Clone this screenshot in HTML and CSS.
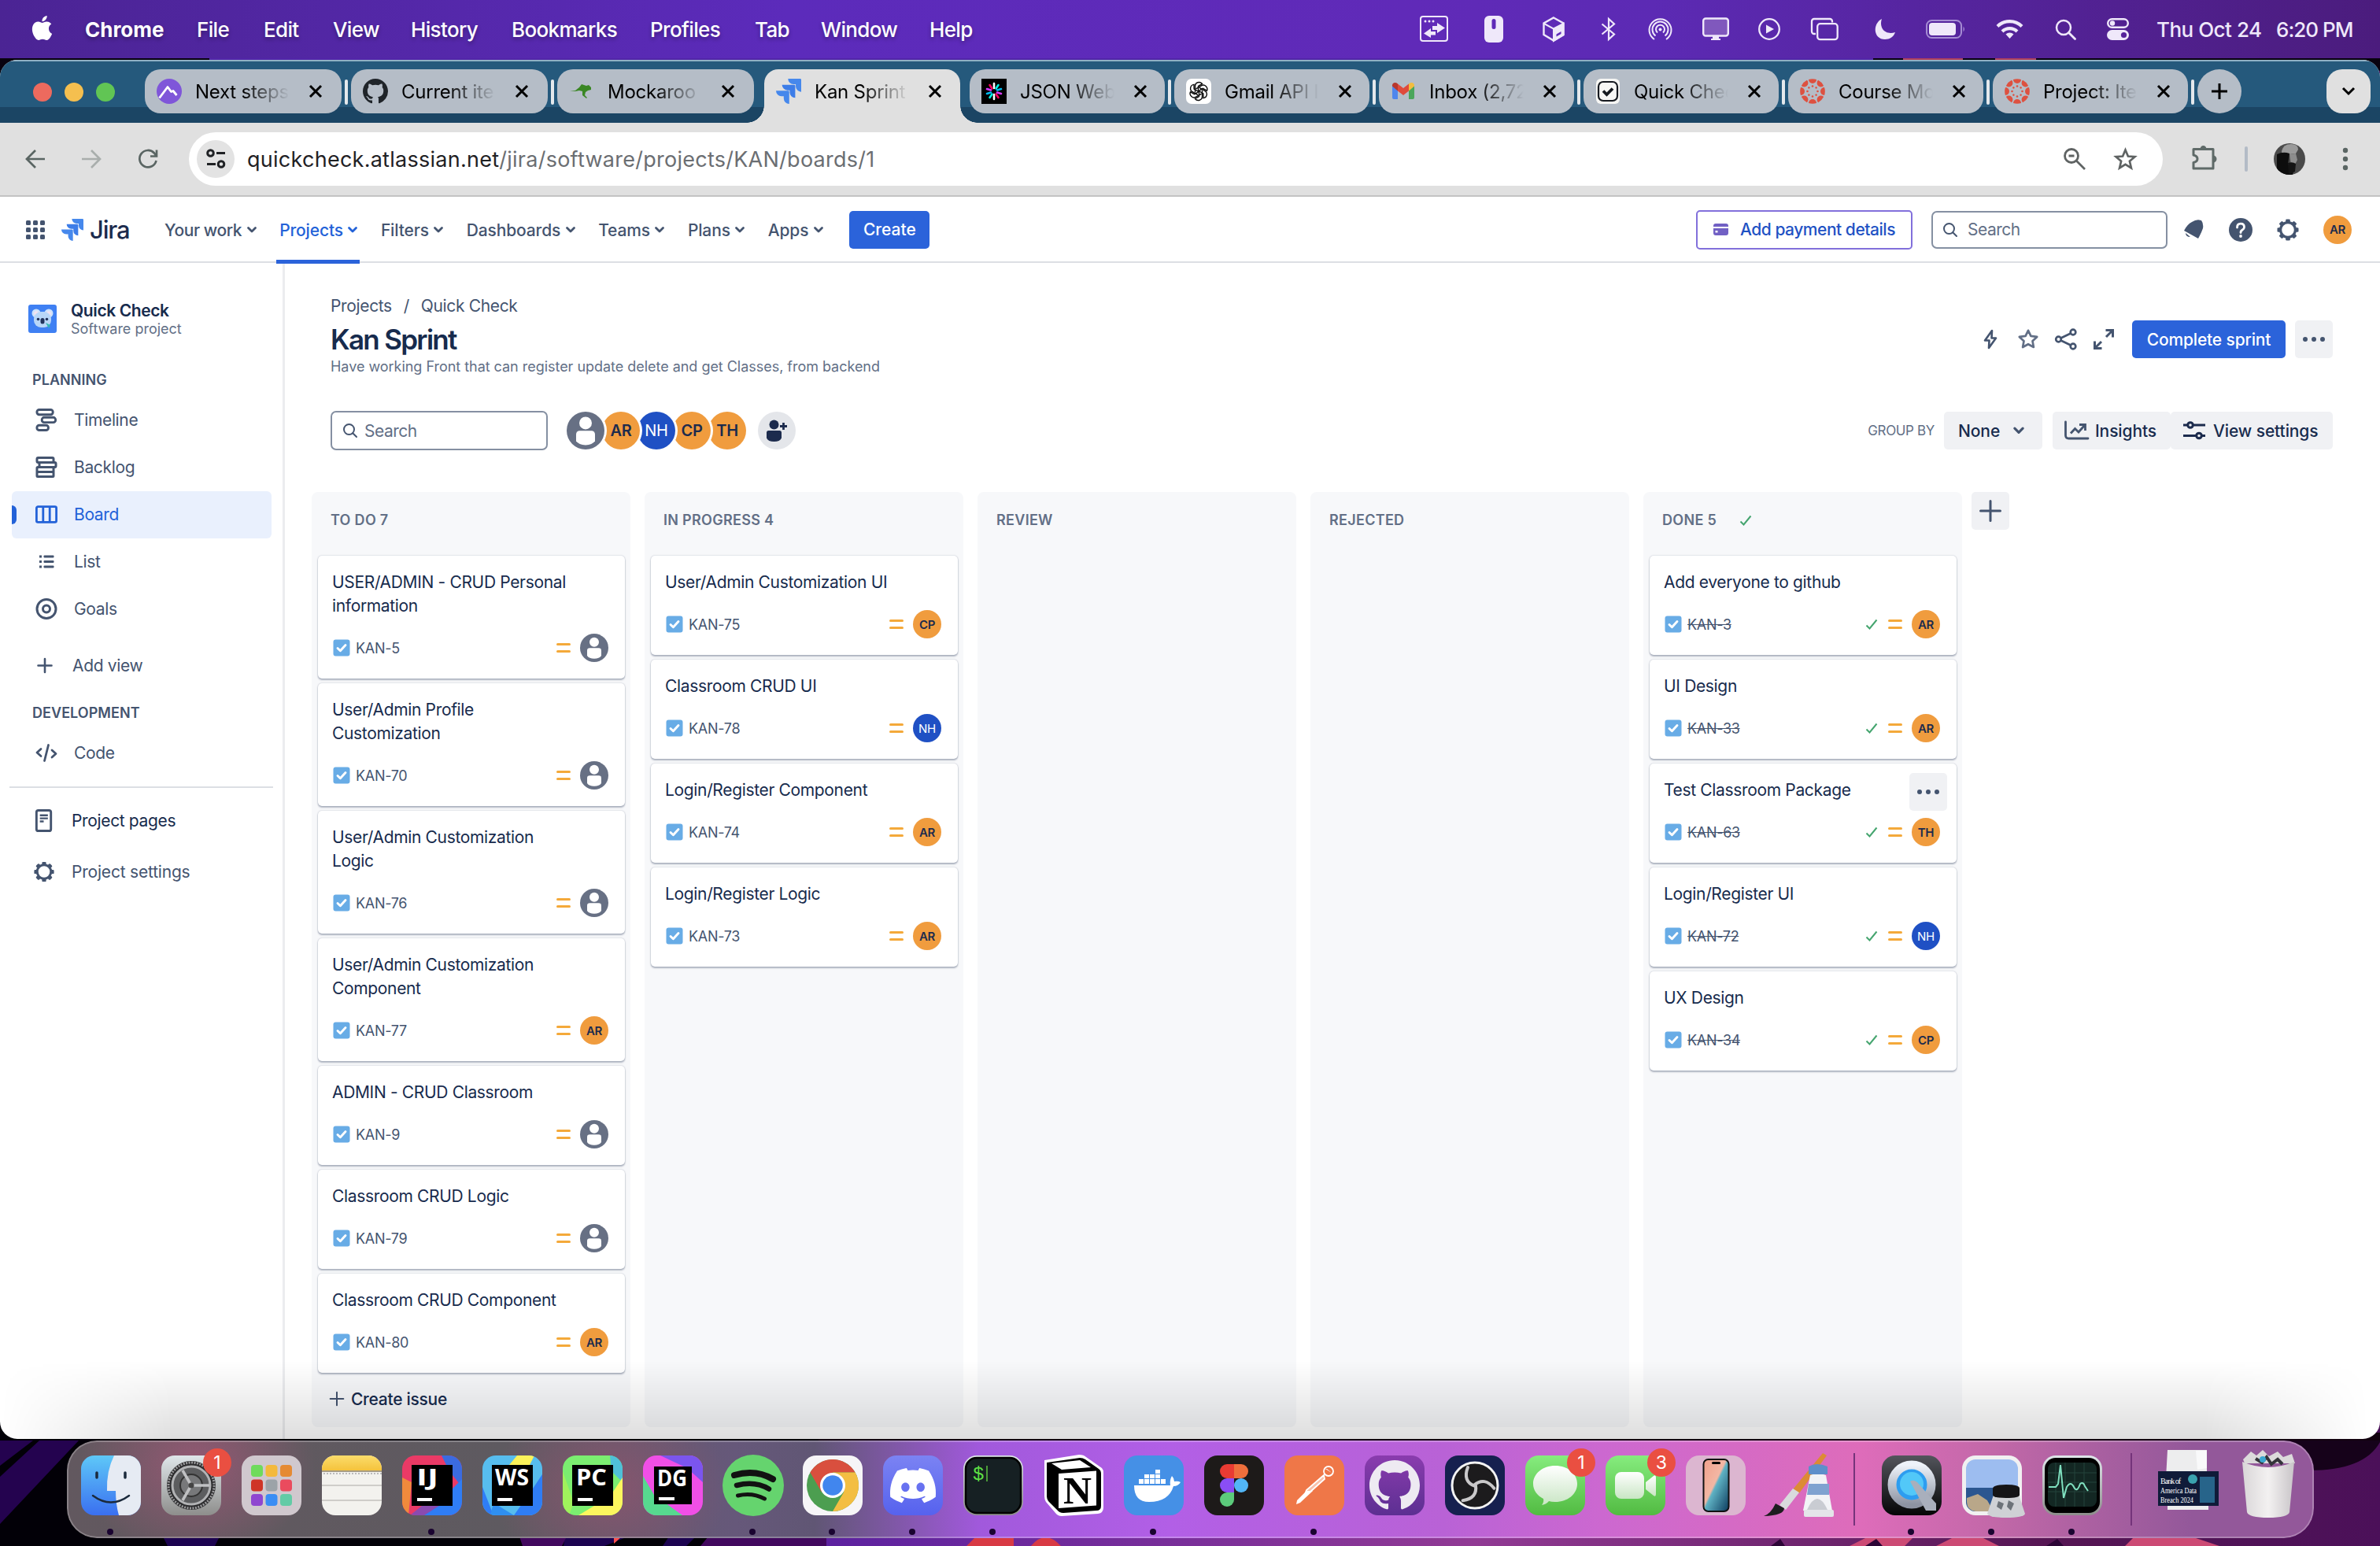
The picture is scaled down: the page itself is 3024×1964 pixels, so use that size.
FILE: index.html
```html
<!DOCTYPE html>
<html lang="en">
<head>
<meta charset="utf-8">
<title>Kan Sprint - Jira</title>
<link rel="stylesheet" href="styles.css">
</head>
<body>
<svg class="defs" aria-hidden="true">
  <defs>
    <linearGradient id="gFinder" x1="0" y1="0" x2="0" y2="1"><stop offset="0" stop-color="#5ec8f8"/><stop offset="1" stop-color="#3a6ff0"/></linearGradient>
    <linearGradient id="gGrey" x1="0" y1="0" x2="0" y2="1"><stop offset="0" stop-color="#dfe6ea"/><stop offset="1" stop-color="#8e8e8c"/></linearGradient>
    <linearGradient id="gGreen" x1="0" y1="0" x2="0" y2="1"><stop offset="0" stop-color="#86ec7e"/><stop offset="1" stop-color="#52bb42"/></linearGradient>
    <linearGradient id="gWhite" x1="0" y1="0" x2="0" y2="1"><stop offset="0" stop-color="#ffffff"/><stop offset="1" stop-color="#c9e6c4"/></linearGradient>
    <linearGradient id="gNote" x1="0" y1="0" x2="0" y2="1"><stop offset="0" stop-color="#fbdc6b"/><stop offset="1" stop-color="#f5c33c"/></linearGradient>
    <linearGradient id="gDiscord" x1="0" y1="0" x2="0" y2="1"><stop offset="0" stop-color="#7b83f3"/><stop offset="1" stop-color="#5662ee"/></linearGradient>
    <linearGradient id="gGit" x1="0" y1="0" x2="0" y2="1"><stop offset="0" stop-color="#8a3cae"/><stop offset="1" stop-color="#5c2f92"/></linearGradient>
    <linearGradient id="gDark" x1="0" y1="0" x2="0" y2="1"><stop offset="0" stop-color="#53555c"/><stop offset="1" stop-color="#050506"/></linearGradient>
    <linearGradient id="gSteel" x1="0" y1="0" x2="0" y2="1"><stop offset="0" stop-color="#eef3fa"/><stop offset="1" stop-color="#8d93a2"/></linearGradient>
    <linearGradient id="gPhone" x1="0" y1="0" x2="1" y2="1"><stop offset="0" stop-color="#f0a08c"/><stop offset=".45" stop-color="#f3b7a4"/><stop offset=".5" stop-color="#5fb2c4"/><stop offset="1" stop-color="#0c3a5c"/></linearGradient>
    <linearGradient id="gBin" x1="0" y1="0" x2="1" y2="0"><stop offset="0" stop-color="#d9d6d8"/><stop offset=".5" stop-color="#f3f1f1"/><stop offset="1" stop-color="#c9c5c8"/></linearGradient>

    <symbol id="x" viewBox="0 0 18 18"><path d="M2 2l14 14M16 2L2 16" stroke="#000" stroke-width="3" fill="none"/></symbol>
    <symbol id="chev" viewBox="0 0 14 10"><path d="M2.500 2.500L7 7l4.500-4.500" stroke="currentColor" stroke-width="2.800" fill="none" stroke-linecap="round" stroke-linejoin="round"/></symbol>
    <symbol id="jira" viewBox="0 0 24 24"><path fill="#4688ec" d="M11.571 11.513H0a5.218 5.218 0 0 0 5.232 5.215h2.130v2.057A5.215 5.215 0 0 0 12.575 24V12.518a1.005 1.005 0 0 0-1.005-1.005z"/><path fill="#3d7de8" d="M17.294 5.757H5.736a5.215 5.215 0 0 0 5.215 5.214h2.129v2.058a5.218 5.218 0 0 0 5.215 5.214V6.758a1.001 1.001 0 0 0-1.001-1.001z"/><path fill="#4688ec" d="M23.013 0H11.455a5.215 5.215 0 0 0 5.215 5.215h2.129v2.057A5.215 5.215 0 0 0 24 12.483V1.005A1.001 1.001 0 0 0 23.013 0Z"/></symbol>
    <symbol id="github" viewBox="0 0 16 16"><path fill="currentColor" d="M8 0C3.580 0 0 3.580 0 8c0 3.540 2.290 6.530 5.470 7.590.400.070.550-.170.550-.380 0-.190-.010-.820-.010-1.490-2.010.370-2.530-.490-2.690-.940-.090-.230-.480-.940-.820-1.130-.280-.150-.680-.520-.010-.530.630-.010 1.080.580 1.230.820.720 1.210 1.870.870 2.330.660.070-.520.280-.870.510-1.070-1.780-.200-3.640-.890-3.640-3.950 0-.870.310-1.590.820-2.150-.080-.200-.360-1.020.080-2.120 0 0 .670-.210 2.200.820.640-.180 1.320-.270 2-.270s1.360.090 2 .270c1.530-1.040 2.200-.820 2.200-.820.440 1.100.160 1.920.080 2.120.510.560.820 1.270.820 2.150 0 3.070-1.870 3.750-3.650 3.950.290.250.540.730.540 1.480 0 1.070-.010 1.930-.010 2.200 0 .210.150.460.550.380A8.010 8.010 0 0 0 16 8c0-4.420-3.580-8-8-8z"/></symbol>
    <symbol id="canvas" viewBox="0 0 32 32"><g fill="#dd5140"><g id="cv"><path d="M11 1a16 16 0 0 1 10 0a5 5 0 0 1-10 0z"/><circle cx="16" cy="9.500" r="1.300"/></g><use href="#cv" transform="rotate(45 16 16)"/><use href="#cv" transform="rotate(90 16 16)"/><use href="#cv" transform="rotate(135 16 16)"/><use href="#cv" transform="rotate(180 16 16)"/><use href="#cv" transform="rotate(225 16 16)"/><use href="#cv" transform="rotate(270 16 16)"/><use href="#cv" transform="rotate(315 16 16)"/></g></symbol>
    <symbol id="search" viewBox="0 0 20 20"><circle cx="8.500" cy="8.500" r="6.500" fill="none" stroke="currentColor" stroke-width="2"/><path d="M13.200 13.200l4.800 4.800" stroke="currentColor" stroke-width="2" stroke-linecap="round"/></symbol>
    <symbol id="task" viewBox="0 0 22 22"><rect x=".5" y=".5" width="21" height="21" rx="3" fill="#68ace6"/><path d="M6 11.500l3.400 3.300L16 7.500" fill="none" stroke="#fff" stroke-width="2.900" stroke-linecap="round" stroke-linejoin="round"/></symbol>
    <symbol id="prio" viewBox="0 0 18 14"><path d="M1.500 2.500h15M1.500 11.500h15" stroke="#f4a93a" stroke-width="3" stroke-linecap="round"/></symbol>
    <symbol id="tick" viewBox="0 0 16 14"><path d="M1.500 8.500L5.500 12.500 14.500 1.500" fill="none" stroke="#45a56f" stroke-width="2"/></symbol>
    <symbol id="person" viewBox="0 0 36 36"><circle cx="18" cy="18" r="18" fill="#677084"/><circle cx="18" cy="10.800" r="6" fill="#fff"/><path d="M9 21.500a3.300 3.300 0 0 1 3.300-3.300h11.400a3.300 3.300 0 0 1 3.300 3.300v6.500q-2.500 3.800-9 3.800t-9-3.800z" fill="#fff"/></symbol>
    <symbol id="gear" viewBox="0 0 30 30"><g fill="#44546f"><g id="tooth"><rect x="12.200" y="1.500" width="5.600" height="4.500" rx="1.300"/><rect x="12.200" y="24" width="5.600" height="4.500" rx="1.300"/></g><use href="#tooth" transform="rotate(45 15 15)"/><use href="#tooth" transform="rotate(90 15 15)"/><use href="#tooth" transform="rotate(135 15 15)"/></g><circle cx="15" cy="15" r="9.400" fill="none" stroke="#44546f" stroke-width="3.200"/></symbol>
    <symbol id="plus" viewBox="0 0 24 24"><path d="M12 2v20M2 12h20" stroke="currentColor" stroke-width="2.400" stroke-linecap="round"/></symbol>
    <symbol id="dots" viewBox="0 0 28 6"><g fill="#44546f"><circle cx="3" cy="3" r="3"/><circle cx="14" cy="3" r="3"/><circle cx="25" cy="3" r="3"/></g></symbol>
    <symbol id="star" viewBox="0 0 28 28"><path d="M14 2.800l3.400 7.100 7.800 1-5.700 5.400 1.400 7.700-6.900-3.800-6.900 3.800 1.400-7.700L2.800 10.900l7.800-1z" fill="none" stroke="currentColor" stroke-width="2.700" stroke-linejoin="round"/></symbol>
  </defs>
</svg>

<svg class="wallpaper" viewBox="0 0 3024 1964">
  <defs>
    <linearGradient id="wp" x1="0" x2="1"><stop offset="0" stop-color="#020008"/><stop offset=".34" stop-color="#12032e"/><stop offset=".34" stop-color="#5b21a0"/><stop offset=".62" stop-color="#913a94"/><stop offset=".86" stop-color="#561653"/><stop offset="1" stop-color="#4b1059"/></linearGradient>
  </defs>
  <rect width="3024" height="1964" fill="url(#wp)"/>
  <rect width="3024" height="90" fill="#08020f"/>
  <rect x="266" y="70" width="2114" height="8" fill="#5226a8"/>
  <path d="M2418 70h76v8h-76zM2535 70h52v8h-52z" fill="#b0405c"/>
  <rect y="1820" width="3024" height="12" fill="#12020f"/>
  <rect y="1820" width="1040" height="144" fill="#020007"/>
  <path d="M0 1830h42L0 1862zM50 1830h50L0 1936v-60z" fill="#24034f"/>
  <path d="M207 1952h72l-6 12h-60zM718 1952h80l-30 12h-52zM850 1952h34l-12 12h-30z" fill="#1c0350"/>
  <path d="M660 1952h60l-6 12h-50zM900 1952h150v12H890z" fill="#42085e"/>
  <path d="M780 1952h10l-10 9z" fill="#ff4f4c"/>
  <path d="M1240 1952h48v12h-60zM1310 1964q18-22 38 0z" fill="#d83a44"/>
  <path d="M2740 1830h284v2q-20 36-90 36l-60-12q-60-20-134-20z" fill="#16021a"/>
  <path d="M2350 1964l20-10h60l-10 10zM2460 1964l20-10h40l20 10zM2700 1964l10-10h80l30 10z" fill="#cc4a74"/>
  <path d="M2250 1964l12-9 6 9zM2370 1964l14-9 8 9zM2600 1964l14-9 8 9z" fill="#2c0536"/>
</svg>

<header class="menubar">
  <nav class="menus">
    <svg class="apple" viewBox="0 0 24 24"><path fill="#fff" d="M12.152 6.896c-.948 0-2.415-1.078-3.960-1.040-2.040.027-3.910 1.183-4.961 3.014-2.117 3.675-.546 9.103 1.519 12.090 1.013 1.454 2.208 3.090 3.792 3.039 1.520-.065 2.090-.987 3.935-.987 1.831 0 2.350.987 3.960.948 1.637-.026 2.676-1.480 3.676-2.948 1.156-1.688 1.636-3.325 1.662-3.415-.039-.013-3.182-1.221-3.220-4.857-.026-3.040 2.480-4.494 2.597-4.559-1.429-2.090-3.623-2.324-4.390-2.376-2-.156-3.675 1.090-4.610 1.090zM15.530 3.830c.843-1.012 1.400-2.427 1.245-3.830-1.207.052-2.662.805-3.532 1.818-.780.896-1.454 2.338-1.273 3.714 1.338.104 2.715-.688 3.559-1.701"/></svg>
    <b>Chrome</b><span>File</span><span>Edit</span><span>View</span><span>History</span><span>Bookmarks</span><span>Profiles</span><span>Tab</span><span>Window</span><span>Help</span>
  </nav>
  <div class="status">
    <svg width="37" height="34" viewBox="0 0 37 34"><rect x="1" y="1" width="34" height="31" rx="3" fill="none" stroke="#efe8fa" stroke-width="2"/><g fill="#efe8fa"><circle cx="7" cy="7" r="1.500"/><circle cx="12" cy="7" r="1.500"/><circle cx="17" cy="7" r="1.500"/><path d="M16 13h6v-4l10 6.500-10 6.500v-4h-6zM20 20h-6v-4L5 22.500 14 28v-3.500h6z"/></g></svg>
    <svg width="24" height="34" viewBox="0 0 24 34"><rect width="24" height="34" rx="6" fill="#efe8fa"/><rect x="9.500" y="4" width="5" height="13" rx="2.500" fill="#5f2ab8"/></svg>
    <svg width="28" height="32" viewBox="0 0 28 32"><path d="M14 1.500l12.500 7v14.500L14 30.500 1.500 23V8.500z" fill="none" stroke="#efe8fa" stroke-width="2.400"/><path d="M2 9l12 6.500V31l12.500-7.500V9L14 15.500" fill="none" stroke="#efe8fa" stroke-width="2"/><path d="M14 15.500L26.500 9v14.500L14 30.500z" fill="#efe8fa"/><path d="M17.500 22.500l6-3.500v3l-6 3.500z" fill="#5f2ab8"/></svg>
    <svg width="20" height="30" viewBox="0 0 20 30"><path d="M1.500 8.500L17 21.500 10 28V2l7 6.500L1.500 21.500" fill="none" stroke="#efe8fa" stroke-width="2.200"/></svg>
    <svg width="31" height="31" viewBox="0 0 31 31"><g fill="none" stroke="#efe8fa" stroke-width="2"><path d="M8 28a14 14 0 1 1 15 0"/><path d="M9.500 23.500a10 10 0 1 1 12 0"/><path d="M12 19.500a5.500 5.500 0 1 1 7 0"/></g><circle cx="15.500" cy="15.500" r="2" fill="#efe8fa"/></svg>
    <svg width="34" height="30" viewBox="0 0 34 30"><rect x="1.200" y="1.500" width="31.600" height="22" rx="3" fill="#8058bd" stroke="#efe8fa" stroke-width="2.400"/><path d="M13 24h8v3h2v2H11v-2h2z" fill="#efe8fa"/></svg>
    <svg width="28" height="28" viewBox="0 0 28 28"><circle cx="14" cy="14" r="12.800" fill="none" stroke="#efe8fa" stroke-width="2.300"/><path d="M10 8.500l10 5.500-10 5.500z" fill="#efe8fa"/></svg>
    <svg width="35" height="28" viewBox="0 0 35 28"><path d="M6 20H4a3 3 0 0 1-3-3V4a3 3 0 0 1 3-3h20a3 3 0 0 1 3 3v1.500" fill="none" stroke="#efe8fa" stroke-width="2.300"/><rect x="8.200" y="7.200" width="25.500" height="20" rx="3.500" fill="none" stroke="#efe8fa" stroke-width="2.300"/></svg>
    <svg width="28" height="28" viewBox="0 0 28 28"><path d="M10 1C-2 7-1 27 14 27c6 0 11-3 13-9-12 4-21-5-17-17z" fill="#efe8fa"/></svg>
    <svg width="51" height="24" viewBox="0 0 51 24"><rect x="1" y="1" width="44" height="22" rx="6.500" fill="none" stroke="#a58cd3" stroke-width="2"/><rect x="4" y="4" width="34" height="16" rx="4" fill="#efe8fa"/><path d="M47.500 8.500q3 3.500 0 7z" fill="#a58cd3"/></svg>
    <svg width="35" height="26" viewBox="0 0 35 26"><g fill="none" stroke="#efe8fa" stroke-width="4.200"><path d="M2 9.500a22 22 0 0 1 31 0"/><path d="M8 16a13.500 13.500 0 0 1 19 0"/></g><path d="M17.500 25l-5-5.500a7.500 7.500 0 0 1 10 0z" fill="#efe8fa"/></svg>
    <svg width="27" height="27" viewBox="0 0 27 27"><circle cx="11" cy="11" r="9" fill="none" stroke="#efe8fa" stroke-width="2.500"/><path d="M17.500 17.500l8 8" stroke="#efe8fa" stroke-width="2.800" stroke-linecap="round"/></svg>
    <svg width="28" height="28" viewBox="0 0 28 28"><rect x="1.200" y="1.200" width="25.600" height="10.600" rx="5.300" fill="none" stroke="#efe8fa" stroke-width="2.400"/><circle cx="7" cy="6.500" r="3.200" fill="#efe8fa"/><rect y="15" width="28" height="13" rx="6.500" fill="#efe8fa"/><circle cx="21.500" cy="21.500" r="3.600" fill="#56229a"/></svg>
    <span>Thu Oct 24</span><span class="time">6:20 PM</span>
  </div>
</header>

<div class="window">
  <div class="tabstrip">
    <div class="lights"><i class="red"></i><i class="amber"></i><i class="green"></i></div>
    <div class="tab"><svg class="fav" viewBox="0 0 32 32"><circle cx="16" cy="16" r="16" fill="#7f56d9"/><path d="M3.500 24.500L14 10.500l4.500 6 2.500-1 4.500 5.500" fill="none" stroke="#fff" stroke-width="2.800" stroke-linejoin="round"/></svg><span class="label">Next steps</span><svg class="close"><use href="#x"/></svg></div>
    <div class="tab"><svg class="fav ink"><use href="#github"/></svg><span class="label">Current ite</span><svg class="close"><use href="#x"/></svg></div>
    <div class="tab"><svg class="fav" viewBox="0 0 32 32"><path d="M1 15l7 0 5-4 3-4 6 2 3-1 3 3v3l-4 1-3 2-1 4 3 3-1 1-5-4 0-5-4-1-5 1z" fill="#3a8724"/></svg><span class="label">Mockaroo</span><svg class="close"><use href="#x"/></svg></div>
    <div class="tab active"><svg class="fav"><use href="#jira"/></svg><span class="label">Kan Sprint</span><svg class="close"><use href="#x"/></svg></div>
    <div class="tab"><svg class="fav" viewBox="0 0 32 32"><rect width="32" height="32"/><g stroke-width="2.600" stroke-linecap="round"><path d="M16 6v6M16 20v6" stroke="#fff"/><path d="M10.500 8l3 4.500M21.500 24l-3-4.500" stroke="#fb015b"/><path d="M21.500 8l-3 4.500M10.500 24l3-4.500" stroke="#00f2e6"/><path d="M7 13l5 1.500M25 19l-5-1.500" stroke="#d63aff"/><path d="M25 13l-5 1.500M7 19l5-1.500" stroke="#00b9f1"/></g></svg><span class="label">JSON Web</span><svg class="close"><use href="#x"/></svg></div>
    <div class="tab"><svg class="fav" viewBox="0 0 32 32"><rect width="32" height="32" rx="7" fill="#fff"/><g fill="none" stroke="#0b0b0b" stroke-width="1.400"><g id="pt"><path d="M11.500 17.500v-8a5 5 0 0 1 9-3l-5 3v6.500"/></g><use href="#pt" transform="rotate(60 16 16)"/><use href="#pt" transform="rotate(120 16 16)"/><use href="#pt" transform="rotate(180 16 16)"/><use href="#pt" transform="rotate(240 16 16)"/><use href="#pt" transform="rotate(300 16 16)"/></g></svg><span class="label">Gmail API I</span><svg class="close"><use href="#x"/></svg></div>
    <div class="tab"><svg class="fav" viewBox="0 0 32 32"><path d="M2 9v15a2 2 0 0 0 2 2h5V13z" fill="#4f86ed"/><path d="M30 9v15a2 2 0 0 1-2 2h-5V13z" fill="#4aa65a"/><path d="M9 6.500l7 5.500 7-5.500v9L16 21l-7-5.500z" fill="#df4a3c"/><path d="M2 9.500v-1C2 5 6 4 9 6.500v9z" fill="#b8372c"/><path d="M30 9.500v-1c0-3.500-4-4.500-7-2v9z" fill="#f2bd3f"/></svg><span class="label">Inbox (2,72</span><svg class="close"><use href="#x"/></svg></div>
    <div class="tab"><svg class="fav" viewBox="0 0 32 32"><rect x="1" y="0" width="30" height="32" rx="6" fill="#f6f6f4"/><rect x="4" y="4" width="24" height="24" rx="6" fill="#f6f6f4" stroke="#15191f" stroke-width="2.200"/><path d="M10 15.500l4.500 4.500 7.500-7.500" fill="none" stroke="#15191f" stroke-width="3.800"/></svg><span class="label">Quick Chec</span><svg class="close"><use href="#x"/></svg></div>
    <div class="tab"><svg class="fav"><use href="#canvas"/></svg><span class="label">Course Mo</span><svg class="close"><use href="#x"/></svg></div>
    <div class="tab"><svg class="fav"><use href="#canvas"/></svg><span class="label">Project: Ite</span><svg class="close"><use href="#x"/></svg></div>
    <div class="newtab"><svg width="22" height="22" viewBox="0 0 22 22"><path d="M11 1v20M1 11h20" stroke="#000" stroke-width="3"/></svg></div>
    <div class="tablist"><svg width="18" height="12" viewBox="0 0 18 12"><path d="M2 2l7 7 7-7" fill="none" stroke="#000" stroke-width="3"/></svg></div>
  </div>

  <div class="toolbar">
    <svg class="back" width="26" height="26" viewBox="0 0 26 26"><path d="M13 2L2 13l11 11M2 13h23" fill="none" stroke="#5a6563" stroke-width="2.700"/></svg>
    <svg class="fwd" width="26" height="26" viewBox="0 0 26 26"><path d="M13 2l11 11-11 11M24 13H1" fill="none" stroke="#a9aeac" stroke-width="2.700"/></svg>
    <svg class="reload" width="26" height="26" viewBox="0 0 26 26"><path d="M23.500 15A10.700 10.700 0 1 1 21 5.500l2.500 3.500M24 1.500V9.500H16" fill="none" stroke="#5a6563" stroke-width="2.700"/></svg>
    <div class="omnibox">
      <span class="site"><svg width="26" height="26" viewBox="0 0 26 26"><g fill="none" stroke="#1f2124" stroke-width="3"><circle cx="6.500" cy="5.500" r="3.800"/><path d="M14 5.500h11"/><circle cx="20" cy="19.500" r="3.800"/><path d="M2 19.500h11"/></g></svg></span>
      <span class="url">quickcheck.atlassian.net<em>/jira/software/projects/KAN/boards/1</em></span>
      <svg class="zoomout" width="30" height="30" viewBox="0 0 30 30"><circle cx="11" cy="11" r="8.500" fill="none" stroke="#5f6363" stroke-width="2.800"/><path d="M17.500 17.500L28 28M7.500 11h7" stroke="#5f6363" stroke-width="2.800"/></svg>
      <svg class="bookmark" width="31" height="30" viewBox="0 0 31 30"><path d="M15.500 3.500l3.400 8 8.600.7-6.600 5.600 2 8.500-7.400-4.500-7.400 4.500 2-8.500-6.600-5.600 8.600-.7z" fill="none" stroke="#5f6363" stroke-width="2.700"/></svg>
    </div>
    <svg class="puzzle" width="34" height="34" viewBox="0 0 34 34"><path d="M3 6.500h25V31H3v-7.500q5-1 5-4.700T3 14z" fill="none" stroke="#5f6a68" stroke-width="3" stroke-linejoin="round"/><path d="M11.500 6.500a4 4.500 0 0 1 8 0zM28 14.500a4.500 4.500 0 0 1 0 9z" fill="#5f6a68"/></svg>
    <i class="bar"></i>
    <svg class="me" width="40" height="40" viewBox="0 0 40 40"><defs><clipPath id="meclip"><circle cx="20" cy="20" r="20"/></clipPath></defs><g clip-path="url(#meclip)"><rect width="40" height="40" fill="#4a4a4a"/><path d="M10 10q2-9 12-9 9 0 9 7l-3 5-17 2z" fill="#9a9a9a"/><path d="M4 14q8-4 16-1l-2 14 8 4-2 9H4z" fill="#0d0d0d"/><path d="M20 14l8-1 2 8-3 6-5 1z" fill="#8d8d8d"/><path d="M18 25q6-2 10 1l-1 10-8 4z" fill="#141414"/></g></svg>
    <svg class="kebab" width="8" height="30" viewBox="0 0 8 30"><g fill="#5a6563"><circle cx="4" cy="4" r="3.200"/><circle cx="4" cy="15" r="3.200"/><circle cx="4" cy="26" r="3.200"/></g></svg>
  </div>

  <div class="jiranav">
    <div class="navleft">
      <svg class="grid" width="24" height="24" viewBox="0 0 24 24"><g fill="#44546f"><rect width="6" height="6" rx="1.500"/><rect x="9" width="6" height="6" rx="1.500"/><rect x="18" width="6" height="6" rx="1.500"/><rect y="9" width="6" height="6" rx="1.500"/><rect x="9" y="9" width="6" height="6" rx="1.500"/><rect x="18" y="9" width="6" height="6" rx="1.500"/><rect y="18" width="6" height="6" rx="1.500"/><rect x="9" y="18" width="6" height="6" rx="1.500"/><rect x="18" y="18" width="6" height="6" rx="1.500"/></g></svg>
      <svg class="mark" width="28" height="28"><use href="#jira"/></svg>
      <span class="word">Jira</span>
      <span class="item first">Your work<svg><use href="#chev"/></svg></span>
      <span class="item current">Projects<svg><use href="#chev"/></svg></span>
      <span class="item">Filters<svg><use href="#chev"/></svg></span>
      <span class="item">Dashboards<svg><use href="#chev"/></svg></span>
      <span class="item">Teams<svg><use href="#chev"/></svg></span>
      <span class="item">Plans<svg><use href="#chev"/></svg></span>
      <span class="item">Apps<svg><use href="#chev"/></svg></span>
      <span class="create">Create</span>
    </div>
    <div class="navright">
      <span class="pay"><svg width="19" height="15" viewBox="0 0 19 15"><path d="M0 3a3 3 0 0 1 3-3h13a3 3 0 0 1 3 3v1H0zM0 6h19v6a3 3 0 0 1-3 3H3a3 3 0 0 1-3-3z" fill="#7160c4"/><rect x="2.500" y="9" width="3" height="2.500" fill="#fff"/></svg>Add payment details</span>
      <span class="find"><svg width="20" height="20"><use href="#search"/></svg>Search</span>
      <svg class="bell" width="28" height="28" viewBox="0 0 28 28"><path d="M12 4Q18 0 24 2q3 4 2 10-2 6-6 13L2 15Q6 7 12 4z" fill="#44546f"/><path d="M4 18q0 5 6 5z" fill="#44546f"/></svg>
      <svg class="help" width="30" height="30" viewBox="0 0 30 30"><circle cx="15" cy="15" r="15" fill="#44546f"/><path d="M10.500 12q0-4.800 4.500-4.800t4.500 4.300q0 2.200-2.300 3.500T15 18.500" fill="none" stroke="#fff" stroke-width="2.800" stroke-linecap="round"/><circle cx="15" cy="23" r="1.900" fill="#fff"/></svg>
      <svg class="cog" width="30" height="30"><use href="#gear"/></svg>
      <span class="av sm ar">AR</span>
    </div>
  </div>

  <div class="page">
    <aside class="side">
      <div class="project">
        <svg width="36" height="36" viewBox="0 0 36 36"><rect width="36" height="36" rx="3" fill="#3f80f3"/><circle cx="10" cy="11" r="5.500" fill="#cfe3fb"/><circle cx="26" cy="11" r="5.500" fill="#cfe3fb"/><circle cx="10" cy="11" r="2.800" fill="#f3e2f0"/><circle cx="26" cy="11" r="2.800" fill="#f3e2f0"/><rect x="7" y="9" width="22" height="20" rx="9" fill="#b9d7f8"/><circle cx="12.500" cy="18.500" r="1.800" fill="#22345c"/><circle cx="23.500" cy="18.500" r="1.800" fill="#22345c"/><rect x="15.500" y="17" width="5" height="7.500" rx="2.500" fill="#22345c"/><path d="M22 23l6 3-2 4z" fill="#35b6b4"/></svg>
        <div><strong>Quick Check</strong><small>Software project</small></div>
      </div>
      <h6>PLANNING</h6>
      <a class="row"><svg viewBox="0 0 28 30"><g fill="none" stroke="#44546f" stroke-width="3"><rect x="1.500" y="1.500" width="21" height="6.500" rx="3"/><rect x="8" y="11.700" width="18" height="6.500" rx="3"/><rect x="1.500" y="22" width="15" height="6.500" rx="3"/></g></svg>Timeline</a>
      <a class="row"><svg viewBox="0 0 28 28"><g fill="none" stroke="#44546f" stroke-width="3"><rect x="2" y="2" width="21" height="6" rx="1.500"/><rect x="2" y="14" width="21" height="6" rx="1"/><rect x="2" y="20" width="21" height="6" rx="1"/><rect x="5" y="8" width="21" height="6" rx="1.500"/></g></svg>Backlog</a>
      <a class="row on"><svg viewBox="0 0 30 24"><path d="M3.500 1.500h23a2 2 0 0 1 2 2v17a2 2 0 0 1-2 2h-23a2 2 0 0 1-2-2v-17a2 2 0 0 1 2-2zM10.500 2v20M19.500 2v20" fill="none" stroke="#2362d8" stroke-width="3"/></svg>Board</a>
      <a class="row"><svg viewBox="0 0 28 28"><g fill="#44546f"><rect x="5" y="6" width="3" height="3"/><rect x="5" y="12.500" width="3" height="3"/><rect x="5" y="19" width="3" height="3"/><rect x="10.500" y="6" width="13" height="3" rx="1"/><rect x="10.500" y="12.500" width="13" height="3" rx="1"/><rect x="10.500" y="19" width="13" height="3" rx="1"/></g></svg>List</a>
      <a class="row"><svg viewBox="0 0 28 28"><g fill="none" stroke="#44546f" stroke-width="3"><circle cx="14" cy="14" r="12"/><circle cx="14" cy="14" r="4.500"/></g></svg>Goals</a>
      <a class="row add"><svg viewBox="0 0 28 28"><path d="M14 5.500v17M5.500 14h17" stroke="#44546f" stroke-width="2.600" stroke-linecap="round"/></svg>Add view</a>
      <h6 class="dev">DEVELOPMENT</h6>
      <a class="row"><svg viewBox="0 0 28 28"><path d="M7 9l-5 4.500L7 18M21 10.500l5 4.500-5 4.500M16.500 4l-5 20" fill="none" stroke="#44546f" stroke-width="2.800" stroke-linecap="round" stroke-linejoin="round"/></svg>Code</a>
      <hr>
      <a class="row pages"><svg viewBox="0 0 28 30"><rect x="4" y="1.500" width="19" height="27" rx="2.500" fill="none" stroke="#44546f" stroke-width="3"/><path d="M8.500 8h10.500M8.500 12h10.500M8.500 16h5" stroke="#44546f" stroke-width="2.400"/></svg>Project pages</a>
      <a class="row settings"><svg viewBox="0 0 30 30"><use href="#gear"/></svg>Project settings</a>
    </aside>

    <main class="main">
      <div class="crumbs"><span>Projects</span><i>/</i><span>Quick Check</span></div>
      <div class="titlebar">
        <h1>Kan Sprint</h1>
        <div class="actions">
          <svg class="bolt" width="20" height="28" viewBox="0 0 20 28"><path d="M12 3L3 15.500h5.500L8 25l9-12.500h-5.500z" fill="none" stroke="#44546f" stroke-width="2.600" stroke-linejoin="round"/></svg>
          <svg class="fave" width="28" height="28"><use href="#star"/></svg>
          <svg class="share" width="30" height="28" viewBox="0 0 30 28"><g fill="none" stroke="#44546f" stroke-width="2.700"><circle cx="5.500" cy="14" r="3.300"/><circle cx="24" cy="5" r="3.300"/><circle cx="24" cy="23" r="3.300"/><path d="M8.500 12.500L21 6.500M8.500 15.500L21 21.500"/></g></svg>
          <svg class="full" width="26" height="26" viewBox="0 0 26 26"><path d="M15.500 1.500h9v9M10.500 24.500h-9v-9M24 2l-8 8M2 24l8-8" fill="none" stroke="#44546f" stroke-width="3"/></svg>
          <span class="primary">Complete sprint</span>
          <span class="more"><svg width="28" height="6"><use href="#dots"/></svg></span>
        </div>
      </div>
      <p class="goal">Have working Front that can register update delete and get Classes, from backend</p>
      <div class="filters">
        <span class="boxsearch"><svg width="20" height="20"><use href="#search"/></svg>Search</span>
        <div class="people">
          <svg class="av lg"><use href="#person"/></svg><span class="av lg ar">AR</span><span class="av lg nh">NH</span><span class="av lg ar">CP</span><span class="av lg ar">TH</span>
        </div>
        <span class="invite"><svg width="28" height="28" viewBox="0 0 28 28"><g fill="#1c2b4d"><circle cx="10.500" cy="6.500" r="6"/><path d="M1 16.500A2.500 2.500 0 0 1 3.500 14h14a2.500 2.500 0 0 1 2.500 2.500v7q-2 4.500-9.500 4.500T1 23.500z"/></g><path d="M22.500 4v9M18 8.500h9" stroke="#1c2b4d" stroke-width="2.800"/></svg></span>
        <div class="right">
          <span class="group">GROUP BY</span>
          <span class="btn none">None<svg width="16" height="12"><use href="#chev"/></svg></span>
          <span class="btn insights"><svg width="31" height="24" viewBox="0 0 31 24"><path d="M1.500 1v17q0 4 4 4H30" fill="none" stroke="#44546f" stroke-width="2.800" stroke-linecap="round"/><path d="M8 15.500l5.500-6 4.500 4.500 7.500-8.500M19 4.500h7.500V12" fill="none" stroke="#44546f" stroke-width="2.800"/></svg>Insights</span>
          <span class="btn view"><svg width="28" height="24" viewBox="0 0 28 24"><g fill="none" stroke="#1c2b4d" stroke-width="3"><circle cx="9" cy="5" r="3.300"/><path d="M0 5h5.500M12.500 5H28"/><circle cx="20" cy="18.500" r="3.300"/><path d="M0 18.500h16.500M23.500 18.500H28"/></g></svg>View settings</span>
        </div>
      </div>

      <div class="board">
        <section class="col">
          <h2>TO DO 7</h2>
          <article class="card"><p>USER/ADMIN - CRUD Personal information</p><div class="meta"><svg class="task"><use href="#task"/></svg><span class="key">KAN-5</span><svg class="prio"><use href="#prio"/></svg><svg class="av sm"><use href="#person"/></svg></div></article>
          <article class="card"><p>User/Admin Profile Customization</p><div class="meta"><svg class="task"><use href="#task"/></svg><span class="key">KAN-70</span><svg class="prio"><use href="#prio"/></svg><svg class="av sm"><use href="#person"/></svg></div></article>
          <article class="card"><p>User/Admin Customization Logic</p><div class="meta"><svg class="task"><use href="#task"/></svg><span class="key">KAN-76</span><svg class="prio"><use href="#prio"/></svg><svg class="av sm"><use href="#person"/></svg></div></article>
          <article class="card"><p>User/Admin Customization Component</p><div class="meta"><svg class="task"><use href="#task"/></svg><span class="key">KAN-77</span><svg class="prio"><use href="#prio"/></svg><span class="av sm ar">AR</span></div></article>
          <article class="card"><p>ADMIN - CRUD Classroom</p><div class="meta"><svg class="task"><use href="#task"/></svg><span class="key">KAN-9</span><svg class="prio"><use href="#prio"/></svg><svg class="av sm"><use href="#person"/></svg></div></article>
          <article class="card"><p>Classroom CRUD Logic</p><div class="meta"><svg class="task"><use href="#task"/></svg><span class="key">KAN-79</span><svg class="prio"><use href="#prio"/></svg><svg class="av sm"><use href="#person"/></svg></div></article>
          <article class="card"><p>Classroom CRUD Component</p><div class="meta"><svg class="task"><use href="#task"/></svg><span class="key">KAN-80</span><svg class="prio"><use href="#prio"/></svg><span class="av sm ar">AR</span></div></article>
          <div class="newissue"><svg width="20" height="20"><use href="#plus"/></svg>Create issue</div>
        </section>
        <section class="col">
          <h2>IN PROGRESS 4</h2>
          <article class="card"><p>User/Admin Customization UI</p><div class="meta"><svg class="task"><use href="#task"/></svg><span class="key">KAN-75</span><svg class="prio"><use href="#prio"/></svg><span class="av sm ar">CP</span></div></article>
          <article class="card"><p>Classroom CRUD UI</p><div class="meta"><svg class="task"><use href="#task"/></svg><span class="key">KAN-78</span><svg class="prio"><use href="#prio"/></svg><span class="av sm nh">NH</span></div></article>
          <article class="card"><p>Login/Register Component</p><div class="meta"><svg class="task"><use href="#task"/></svg><span class="key">KAN-74</span><svg class="prio"><use href="#prio"/></svg><span class="av sm ar">AR</span></div></article>
          <article class="card"><p>Login/Register Logic</p><div class="meta"><svg class="task"><use href="#task"/></svg><span class="key">KAN-73</span><svg class="prio"><use href="#prio"/></svg><span class="av sm ar">AR</span></div></article>
        </section>
        <section class="col"><h2>REVIEW</h2></section>
        <section class="col"><h2>REJECTED</h2></section>
        <section class="col done">
          <h2>DONE 5<svg class="tick"><use href="#tick"/></svg></h2>
          <article class="card"><p>Add everyone to github</p><div class="meta"><svg class="task"><use href="#task"/></svg><span class="key">KAN-3</span><svg class="tick"><use href="#tick"/></svg><svg class="prio"><use href="#prio"/></svg><span class="av sm ar">AR</span></div></article>
          <article class="card"><p>UI Design</p><div class="meta"><svg class="task"><use href="#task"/></svg><span class="key">KAN-33</span><svg class="tick"><use href="#tick"/></svg><svg class="prio"><use href="#prio"/></svg><span class="av sm ar">AR</span></div></article>
          <article class="card"><p>Test Classroom Package</p><div class="meta"><svg class="task"><use href="#task"/></svg><span class="key">KAN-63</span><svg class="tick"><use href="#tick"/></svg><svg class="prio"><use href="#prio"/></svg><span class="av sm ar">TH</span></div><span class="cardmenu"><svg width="28" height="6"><use href="#dots"/></svg></span></article>
          <article class="card"><p>Login/Register UI</p><div class="meta"><svg class="task"><use href="#task"/></svg><span class="key">KAN-72</span><svg class="tick"><use href="#tick"/></svg><svg class="prio"><use href="#prio"/></svg><span class="av sm nh">NH</span></div></article>
          <article class="card"><p>UX Design</p><div class="meta"><svg class="task"><use href="#task"/></svg><span class="key">KAN-34</span><svg class="tick"><use href="#tick"/></svg><svg class="prio"><use href="#prio"/></svg><span class="av sm ar">CP</span></div></article>
        </section>
        <span class="addcol"><svg width="30" height="30"><use href="#plus"/></svg></span>
      </div>
    </main>
  </div>
  <div class="dockshade"></div>
</div>

<div class="dock">
  <div class="app run"><svg viewBox="0 0 76 76"><defs><clipPath id="r"><rect width="76" height="76" rx="17"/></clipPath></defs><g clip-path="url(#r)"><rect width="76" height="76" fill="url(#gFinder)"/><path d="M42 0h34v76H48q-4-14-4-31H33Q32 20 42 0z" fill="#e6ebf3"/></g><path d="M20 22v6M56 22v6" stroke="#1b2a3c" stroke-width="3.500" stroke-linecap="round"/><path d="M15 51q23 17 46 0" fill="none" stroke="#1b2a3c" stroke-width="2.500" stroke-linecap="round"/></svg></div>
  <div class="app"><svg viewBox="0 0 76 76"><rect width="76" height="76" rx="17" fill="url(#gGrey)"/><circle cx="38" cy="38" r="31" fill="#2c2c2e"/><circle cx="38" cy="38" r="29" fill="none" stroke="#9a9a9c" stroke-width="3" stroke-dasharray="2 1.500"/><circle cx="38" cy="38" r="24" fill="#5c5d5f"/><circle cx="38" cy="38" r="24" fill="none" stroke="#b2b3b5" stroke-width="3"/><circle cx="38" cy="38" r="14" fill="#77787a" stroke="#333" stroke-width="2"/><path d="M38 38h23M38 38L27 19M38 38L27 57" stroke="#c0c1c3" stroke-width="3.500"/><circle cx="38" cy="38" r="3.500" fill="#444"/></svg><b class="badge">1</b></div>
  <div class="app"><svg viewBox="0 0 76 76"><rect width="76" height="76" rx="17" fill="#d0c8ce"/><g><rect x="12" y="12" width="15" height="15" rx="4" fill="#6fdb5c"/><rect x="30.500" y="12" width="15" height="15" rx="4" fill="#f4b93c"/><rect x="49" y="12" width="15" height="15" rx="4" fill="#e58a34"/><rect x="12" y="30.500" width="15" height="15" rx="4" fill="#cf3527"/><rect x="30.500" y="30.500" width="15" height="15" rx="4" fill="#9ca3a8"/><rect x="49" y="30.500" width="15" height="15" rx="4" fill="#ea4b5e"/><rect x="12" y="49" width="15" height="15" rx="4" fill="#8f46d0"/><rect x="30.500" y="49" width="15" height="15" rx="4" fill="#3a8df4"/><rect x="49" y="49" width="15" height="15" rx="4" fill="#62cba6"/></g></svg></div>
  <div class="app"><svg viewBox="0 0 76 76"><g clip-path="url(#r)"><rect width="76" height="76" fill="#f3f2ee"/><rect width="76" height="19" fill="url(#gNote)"/><path d="M0 20h76" stroke="#a79c84" stroke-width="2"/><path d="M2 23h74" stroke="#bbb" stroke-width="2" stroke-dasharray="2 2"/><path d="M0 38h76M0 57h76" stroke="#cfcdc9" stroke-width="2"/></g></svg></div>
  <div class="app run"><svg viewBox="0 0 76 76"><g clip-path="url(#r)"><rect width="76" height="76" fill="#ea3a66"/><path d="M50 0h26v40L60 20z" fill="#3b6be0"/><path d="M0 28l12 6-4 42H0z" fill="#f08a3c"/><path d="M76 30v46H26l30-26z" fill="#2f7df5"/><path d="M10 76l30-24 10 10-22 14z" fill="#8a4bb0"/></g><rect x="12" y="12" width="52" height="52"/><text x="18" y="38" class="jb" textLength="28" lengthAdjust="spacingAndGlyphs">IJ</text><rect x="19" y="54" width="19" height="4" fill="#fff"/></svg></div>
  <div class="app"><svg viewBox="0 0 76 76"><g clip-path="url(#r)"><rect width="76" height="76" fill="#57bdee"/><path d="M44 0h22l-6 12H34z" fill="#fbf25a"/><path d="M76 24v52H40l24-34zM0 40l14 36H0z" fill="#2f7df5"/><path d="M14 60l26 16H10z" fill="#2f8ff0"/></g><rect x="12" y="12" width="52" height="52"/><text x="16" y="38" class="jb" textLength="43" lengthAdjust="spacingAndGlyphs">WS</text><rect x="19" y="54" width="19" height="4" fill="#fff"/></svg></div>
  <div class="app"><svg viewBox="0 0 76 76"><g clip-path="url(#r)"><rect width="76" height="76" fill="#7bee70"/><path d="M60 0h16v34L62 20z" fill="#4fc0d8"/><path d="M76 28v48H20l40-24z" fill="#fcf65e"/><path d="M0 20l14 40-6 16H0z" fill="#a0f25c"/></g><rect x="12" y="12" width="52" height="52"/><text x="17" y="38" class="jb" textLength="39" lengthAdjust="spacingAndGlyphs">PC</text><rect x="19" y="54" width="19" height="4" fill="#fff"/></svg></div>
  <div class="app"><svg viewBox="0 0 76 76"><g clip-path="url(#r)"><rect width="76" height="76" fill="#f04fe6"/><path d="M22 0h54v34L56 16z" fill="#7b55ee"/><path d="M0 26l14 24 36 26H0z" fill="#57d98f"/></g><rect x="14" y="14" width="48" height="48"/><text x="18" y="39" class="jb" textLength="38" lengthAdjust="spacingAndGlyphs">DG</text><rect x="20" y="53" width="20" height="4" fill="#fff"/></svg></div>
  <div class="app run"><svg viewBox="0 0 76 76"><circle cx="38" cy="38" r="39" fill="#65d46e"/><g fill="none" stroke="#121212" stroke-linecap="round"><path d="M14 25q27-8 49 5" stroke-width="8"/><path d="M17 38q23-6 41 4.500" stroke-width="6.500"/><path d="M18.500 51q18-4.500 34 4" stroke-width="5"/></g></svg></div>
  <div class="app run"><svg viewBox="0 0 76 76"><rect width="76" height="76" rx="17" fill="#f6f5f7"/><circle cx="38" cy="38" r="33" fill="#4c9e50"/><path d="M9.400 21.500A33 33 0 0 1 66.600 21.500L38 21.500 23.700 46.200z" fill="#d94f3e"/><path d="M66.600 21.500A33 33 0 0 1 38 71L52.300 46.200 38 21.500z" fill="#f3be42"/><circle cx="38" cy="38" r="16" fill="#fff"/><circle cx="38" cy="38" r="12.800" fill="#4186ee"/></svg></div>
  <div class="app run"><svg viewBox="0 0 76 76"><rect width="76" height="76" rx="17" fill="url(#gDiscord)"/><g transform="translate(9 9) scale(2.420)"><path fill="#fff" d="M20.317 4.370a19.791 19.791 0 0 0-4.885-1.515.074.074 0 0 0-.079.037c-.211.375-.445.865-.608 1.250-1.845-.276-3.680-.276-5.487 0-.164-.393-.406-.874-.618-1.250a.077.077 0 0 0-.079-.037 19.736 19.736 0 0 0-4.885 1.515.070.070 0 0 0-.032.028C.533 9.046-.319 13.580.099 18.058a.082.082 0 0 0 .031.056c2.053 1.508 4.041 2.423 5.993 3.029a.078.078 0 0 0 .084-.028c.462-.630.873-1.295 1.226-1.994a.076.076 0 0 0-.042-.106c-.653-.248-1.274-.550-1.872-.892a.077.077 0 0 1-.008-.128c.126-.094.252-.192.372-.291a.074.074 0 0 1 .078-.011c3.928 1.793 8.180 1.793 12.061 0a.074.074 0 0 1 .079.010c.120.099.246.198.373.292a.077.077 0 0 1-.007.128 12.299 12.299 0 0 1-1.873.891.077.077 0 0 0-.041.107c.360.698.772 1.363 1.225 1.993a.076.076 0 0 0 .084.029c1.961-.607 3.950-1.522 6.002-3.029a.077.077 0 0 0 .031-.055c.500-5.177-.838-9.674-3.549-13.660a.061.061 0 0 0-.031-.029zM8.020 15.331c-1.183 0-2.157-1.086-2.157-2.419 0-1.333.956-2.419 2.157-2.419 1.211 0 2.176 1.095 2.157 2.419 0 1.333-.956 2.419-2.157 2.419zm7.975 0c-1.183 0-2.157-1.086-2.157-2.419 0-1.333.955-2.419 2.157-2.419 1.211 0 2.176 1.095 2.157 2.419 0 1.333-.946 2.419-2.157 2.419z"/></g></svg></div>
  <div class="app run"><svg viewBox="0 0 76 76"><rect width="76" height="76" rx="17" fill="url(#gGrey)"/><rect x="3" y="3" width="70" height="70" rx="14" fill="#162023" stroke="#000" stroke-width="2.500"/><text x="12" y="31" class="term">$</text><path d="M30 13v20" stroke="#4b9a3a" stroke-width="2"/></svg></div>
  <div class="app"><svg viewBox="0 0 76 76"><path d="M1 6l44-7q6 0 9 3l20 14q2 2 2 6v44q0 7-7 8l-46 3q-5 0-8-4L3 59q-2-3-2-7z" fill="#fff"/><path d="M4 9l42-6q4 0 7 2l17 12q3 2 3 6v41q0 6-6 6l-42 3q-5 0-8-4L6 58q-2-3-2-6z" fill="#000"/><path d="M10 10l36-4 14 9-37 3z" fill="#fff"/><path d="M19 23l48-3.500v44L19 67z" fill="#fff"/><text x="25" y="61" class="notion" textLength="36" lengthAdjust="spacingAndGlyphs">N</text></svg></div>
  <div class="app run"><svg viewBox="0 0 76 76"><rect width="76" height="76" rx="17" fill="#4590e6"/><g fill="#fff"><path d="M13 38h46q-1-7 2-12 3 3 3 7 5-1 8 1-3 5-9 5-6 20-31 20-19 0-19-21z"/><path d="M19 30h6v6h-6zM26 30h6v6h-6zM33 30h6v6h-6zM40 30h6v6h-6zM47 30h6v6h-6zM26 24h6v5h-6zM33 24h6v5h-6zM40 24h6v5h-6zM40 18h6v5h-6z"/></g></svg></div>
  <div class="app"><svg viewBox="0 0 76 76"><rect width="76" height="76" rx="17" fill="#1d1a19"/><path d="M38 11H29a9 9 0 0 0 0 18h9z" fill="#e93b33"/><path d="M38 11h9a9 9 0 0 1 0 18h-9z" fill="#ee6f3c"/><path d="M38 29H29a9 9 0 0 0 0 18h9z" fill="#8a4ef5"/><circle cx="47" cy="38" r="9" fill="#52b6f6"/><path d="M38 47H29a9 9 0 1 0 9 9z" fill="#5ccb7b"/></svg></div>
  <div class="app run"><svg viewBox="0 0 76 76"><rect width="76" height="76" rx="17" fill="#ef7748"/><circle cx="56" cy="20" r="6" fill="none" stroke="#fff" stroke-width="1.800"/><path d="M52 17l8 5-6-5z" fill="#fff"/><path d="M50 25L28 44l-3 8 8-6 18-16z" fill="#fff" fill-opacity=".55" stroke="#fff" stroke-width="1.800"/><path d="M28 45L16 57l-1 5 5-2 16-15z" fill="#fff"/></svg></div>
  <div class="app"><svg viewBox="0 0 76 76" color="#eeeaf2"><rect width="76" height="76" rx="17" fill="url(#gGit)"/><use href="#github" x="6" y="6" width="64" height="64"/></svg></div>
  <div class="app"><svg viewBox="0 0 76 76"><rect width="76" height="76" rx="17" fill="#16204f"/><circle cx="38" cy="38" r="29" fill="#1c1b1d" stroke="#f3f3f3" stroke-width="3"/><g fill="none" stroke="#c9c8ca" stroke-width="4" stroke-linecap="round"><g id="ob"><path d="M38 39Q22 33 29 15"/></g><use href="#ob" transform="rotate(120 38 38)"/><use href="#ob" transform="rotate(240 38 38)"/></g></svg></div>
  <div class="app"><svg viewBox="0 0 76 76"><rect width="76" height="76" rx="17" fill="url(#gGreen)"/><path d="M38 13c16 0 28 10 28 23S54 59 38 59q-5 0-8-1-3 4-9 5 3-4 2-8C15 51 10 44 10 36c0-13 12-23 28-23z" fill="url(#gWhite)"/></svg><b class="badge">1</b></div>
  <div class="app"><svg viewBox="0 0 76 76"><rect width="76" height="76" rx="17" fill="url(#gGreen)"/><rect x="12" y="21" width="37" height="34" rx="8" fill="url(#gWhite)"/><path d="M51 34l10-8q3-2 3 2v21q0 4-3 2l-10-8z" fill="url(#gWhite)"/></svg><b class="badge">3</b></div>
  <div class="app"><svg viewBox="0 0 76 76"><rect width="76" height="76" rx="17" fill="#dcb6d0"/><rect x="22.500" y="5" width="32" height="66" rx="6" fill="url(#gPhone)" stroke="#111" stroke-width="2"/><rect x="33" y="8" width="11" height="3" rx="1.500"/></svg></div>
  <div class="app"><svg viewBox="0 0 76 76"><path d="M72-3l5 3-35 48-8-5z" fill="#dc8b35"/><path d="M34 42l8 5-17 22-8-6z" fill="#d9dadd"/><path d="M12 61l11 6q0 9-26 10 9-3 15-16z" fill="#1d1d1f"/><path d="M56 25q10-4 20 0l8 45H47z" fill="#f2f3f6"/><path d="M54 36h26v14H52z" fill="#7fa2d0"/><path d="M54 14q10-6 24 0v10H54z" fill="#5e8fca"/><path d="M52 69q13-28 26 0z" fill="#c9ccd2"/><rect x="48" y="69" width="38" height="9" rx="2" fill="#e4e5e9"/></svg></div>
  <i class="sep"></i>
  <div class="app run"><svg viewBox="0 0 76 76"><rect width="76" height="76" rx="17" fill="url(#gDark)"/><circle cx="38" cy="37" r="25" fill="#2d9df0" stroke="url(#gSteel)" stroke-width="11"/><circle cx="38" cy="36" r="15" fill="#52c8f8"/><path d="M36 33q4-3 9 1l24 27v9H56z" fill="#a9afbc"/></svg></div>
  <div class="app run"><svg viewBox="0 0 76 76"><rect width="76" height="76" rx="17" fill="#f1f0f1"/><rect x="5" y="5" width="66" height="66" rx="12" fill="#9dbdf0"/><path d="M5 41h66v18a12 12 0 0 1-12 12H17A12 12 0 0 1 5 59z" fill="#2b5690"/><path d="M6 54l14-5 12 8 8 14H17q-11-2-11-12z" fill="#b9a789"/><path d="M40 50h32l8 24q-2 5-24 5t-24-5z" fill="#cfd1d5"/><path d="M39 42q0-5 17-5t17 5v8q0 4-17 4t-17-4z" fill="#151517"/><path d="M46 58l7 3-3 8-6-4zM59 57l7 4-4 9-5-5z" fill="#6c7278"/></svg></div>
  <div class="app run"><svg viewBox="0 0 76 76"><rect width="76" height="76" rx="17" fill="url(#gGrey)"/><rect x="3" y="3" width="70" height="70" rx="14" fill="#000"/><rect x="7" y="9" width="62" height="56" rx="8" fill="#132723"/><path d="M17 9v56M29 9v56M41 9v56M53 9v56M7 22h62M7 34h62M7 46h62" stroke="#24443d" stroke-width="1"/><path d="M8 40h9l3-4 3-24 4 42 4-14q5-8 9 0t8-4q4-3 6 3l4 6" fill="none" stroke="#7fe0bf" stroke-width="2"/></svg></div>
  <i class="sep wide"></i>
  <div class="app"><svg viewBox="0 0 76 76"><path d="M12-7h50v36H10zM12 60h52v9H12z" fill="#ededee"/><path d="M48-6h14v22l-12 2z" fill="#f9f9fa"/><rect x="0" y="20" width="77" height="44" fill="#101b39"/><rect x="53" y="27" width="19" height="33" fill="#27648a"/><circle cx="44" cy="30" r="6" fill="#3aa2ae"/><text x="3" y="36" class="doc" textLength="26">Bank of</text><text x="3" y="48" class="doc" textLength="46" lengthAdjust="spacingAndGlyphs">America Data</text><text x="3" y="60" class="doc" textLength="42" lengthAdjust="spacingAndGlyphs">Breach 2024</text></svg></div>
  <div class="app"><svg viewBox="0 0 76 76"><path d="M6 5l10-10 7 5 8-7 8 8 11-6 7 7 11-4 4 12H8z" fill="#dcdadb"/><path d="M22 4l8 5 6-7 6 9 8-6 6 6" fill="none" stroke="#34343a" stroke-width="4"/><circle cx="31" cy="5" r="4" fill="#3aa7d0"/><path d="M5 8q33 14 66 0l-6 64q-2 7-27 7t-27-7z" fill="url(#gBin)"/></svg></div>
</div>
</body>
</html>
```
FILE: styles.css
```css
* { box-sizing: border-box; }
body { margin: 0; width: 3024px; height: 1964px; position: relative; overflow: hidden; background: #08020f; font-family: Inter, "Liberation Sans", sans-serif; color: #172b4d; display: flex; flex-direction: column; }
svg { display: block; flex: none; overflow: visible; }
.defs { position: absolute; width: 0; height: 0; }
.wallpaper { position: absolute; inset: 0; width: 3024px; height: 1964px; }

/* menu bar */
.menubar { position: relative; flex: none; height: 74px; display: flex; background: linear-gradient(90deg, #4b2494 0, #5c2bbb 1000px, #602ab8 1800px, #5c2ab4 2100px, #4b1c7d 3024px); color: #fff; font-size: 26px; font-weight: 500; white-space: pre; }
.menus { display: grid; grid-template-columns: 67px 142px 85px 88px 99px 128px 176px 133px 84px 138px 100px; align-items: center; padding-left: 41px; letter-spacing: -.65px; text-shadow: 0 3px 5px rgba(0,0,0,.3); }
.menus b { letter-spacing: 0; }
.apple { width: 31px; height: 31px; margin: -4px 0 0 -3px; }
.status { display: grid; grid-template-columns: 82px 74px 74px 60px 69px 71px 67px 80px 66px 89px 75px 66px 63px 152px 100px; align-items: center; padding-left: 523px; color: #efe8fa; letter-spacing: -.5px; }
.time { letter-spacing: -1px; }

/* browser window */
.window { position: relative; flex: none; margin-top: 2px; height: 1752px; border-radius: 22px; overflow: hidden; background: #fff; }
.tabstrip { height: 80px; display: flex; padding-top: 12px; background: linear-gradient(#8fb0c4 0, #8fb0c4 2px, #25597c 2px, #25597c 60px, #1b4564 60px); }
.lights { width: 184px; flex: none; display: flex; gap: 16px; padding: 17px 0 0 42px; }
.lights i { width: 24px; height: 24px; border-radius: 50%; }
.red { background: #ed6a5e; } .amber { background: #f5bf4f; } .green { background: #61c554; }
.tab { position: relative; flex: none; width: 250px; height: 56px; margin-right: 12px; border-radius: 20px; background: #b5bdc7; display: flex; align-items: center; padding-left: 15px; font-size: 24px; letter-spacing: -.25px; color: #000; }
.tab::after { content: ""; position: absolute; right: -8px; top: 13px; width: 4px; height: 32px; border-radius: 2px; background: #e4e8ec; }
.tab.active { width: 249px; }
.active ~ .tab { width: 248px; }
.tab:has(+ .active)::after, .tab.active::after { display: none; }
.tab.active { height: 68px; margin-left: 1px; padding-bottom: 12px; border-radius: 18px 18px 0 0; background: #e0e0e0; }
.tab.active::before { content: ""; position: absolute; left: -22px; right: -22px; bottom: 0; height: 22px; background: radial-gradient(circle at 0 0, transparent 21.500px, #e0e0e0 22px) left / 22px 22px no-repeat, radial-gradient(circle at 100% 0, transparent 21.500px, #e0e0e0 22px) right / 22px 22px no-repeat; }
.fav { width: 32px; height: 32px; }
.fav.ink { color: #1f2429; }
.label { width: 120px; margin-left: 17px; overflow: hidden; white-space: nowrap; -webkit-mask-image: linear-gradient(90deg, #000 50%, transparent 100%); mask-image: linear-gradient(90deg, #000 50%, transparent 100%); }
.close { width: 18px; height: 18px; margin-left: 24px; }
.newtab { flex: none; width: 56px; height: 56px; border-radius: 50%; background: #b5bdc7; display: grid; place-items: center; }
.tablist { flex: none; width: 56px; height: 56px; border-radius: 20px; background: #e0e0e0; display: grid; place-items: center; margin-left: 108px; }
.toolbar { height: 94px; display: flex; align-items: center; background: #e0e0e0; border-bottom: 2px solid #c3c3c3; padding-left: 32px; }
.fwd { margin-left: 45px; }
.reload { margin-left: 46px; }
.omnibox { flex: none; width: 2508px; height: 68px; margin-left: 39px; border-radius: 34px; background: #fff; display: flex; align-items: center; padding-left: 10px; }
.site { width: 48px; height: 48px; border-radius: 50%; background: #e3e3e3; display: grid; place-items: center; }
.url { width: 2303px; margin-left: 16px; font-size: 27px; letter-spacing: .26px; color: #1f2124; }
.url em { font-style: normal; color: #6b6e72; }
.zoomout { margin-left: 4px; }
.bookmark { margin-left: 34px; }
.puzzle { margin: -4px 0 0 36px; }
.bar { width: 4px; height: 32px; border-radius: 2px; background: #b3bbc6; margin-left: 34px; }
.me { margin-left: 33px; }
.kebab { margin-left: 47px; }

/* Jira navigation */
.jiranav { height: 84px; display: flex; justify-content: space-between; border-bottom: 2px solid #dcdfe4; padding-top: 1px; background: #fff; font-size: 21px; font-weight: 500; color: #44546f; }
.navleft { display: flex; align-items: center; padding-left: 33px; }
.navleft .mark { margin-left: 21px; }
.word { width: 95px; margin-left: 8px; font-size: 31px; letter-spacing: -1.200px; color: #1c2b4d; }
.item { display: flex; align-items: center; gap: 5.500px; height: 83px; margin-right: 28.500px; letter-spacing: -.15px; white-space: nowrap; position: relative; padding-top: 1px; }
.item.first { letter-spacing: -.4px; }
.item svg { width: 14px; height: 10px; }
.item.current { color: #2362d8; }
.item.current::after { content: ""; position: absolute; left: -4px; right: -2px; bottom: -2px; height: 5px; background: #2b63da; }
.create { height: 48px; width: 102px; margin-left: 4px; border-radius: 5px; background: #2b63da; color: #fff; display: grid; place-items: center; }
.navright { display: flex; align-items: center; padding-right: 36px; }
.pay { height: 50px; width: 275px; border: 2px solid #8270db; border-radius: 5px; display: flex; align-items: center; gap: 15px; padding-left: 20px; color: #1f52c4; letter-spacing: -.47px; white-space: nowrap; }
.find { height: 48px; width: 300px; margin-left: 24px; border: 2px solid #8590a2; border-radius: 7px; display: flex; align-items: center; gap: 12px; padding-left: 12px; font-weight: 400; color: #626f86; letter-spacing: -.5px; }
.find svg, .boxsearch svg { color: #44546f; }
.bell { margin-left: 19px; } .help { margin-left: 31px; } .cog { margin: 0 30px; }

/* avatars */
.av { border-radius: 50%; display: grid; place-items: center; flex: none; font-weight: 600; letter-spacing: -.3px; }
.av.sm { width: 36px; height: 36px; font-size: 15px; }
.av.lg { width: 48px; height: 48px; font-size: 20px; box-shadow: 0 0 0 3px #fff; background: #fff; }
.av.ar { background: #f09c3e; color: #1c2b4d; }
.av.nh { background: #1f50c4; color: #fff; font-weight: 400; }

/* sidebar */
.page { display: flex; height: 1494px; }
.side { flex: none; width: 362px; border-right: 3px solid #ebecef; padding-top: 50px; font-size: 21px; color: #44546f; }
.project { display: flex; align-items: center; gap: 18px; height: 44px; padding-left: 36px; }
.project svg { margin-top: -2px; }
.project strong, .project small { display: block; line-height: 23px; }
.project strong { font-weight: 600; color: #172b4d; letter-spacing: -.4px; }
.project small { font-size: 18px; color: #626f86; }
.side h6 { margin: 43px 0 9px 41px; font-size: 18px; line-height: 24px; font-weight: 600; letter-spacing: .05px; color: #44546f; }
.side h6.dev { margin-top: 18px; }
.row { position: relative; display: flex; align-items: center; gap: 21px; height: 60px; margin: 0 14px 0 15px; padding: 0 0 2px 30px; letter-spacing: -.35px; }
.row svg { width: 28px; height: 29px; }
.row.on { background: #e9f0fd; border-radius: 6px; color: #2362d8; }
.row.on::before { content: ""; position: absolute; left: 0; top: 18px; width: 6px; height: 24px; border-radius: 0 6px 6px 0; background: #2362d8; }
.row.add { margin-top: 12px; padding-left: 28px; }
.row.pages { margin-top: 12px; padding-left: 27px; color: #172b4d; }
.row.settings { margin-top: 5px; padding-left: 27px; letter-spacing: -.2px; }
.side hr { border: 0; height: 2px; margin: 12px 12px 0; background: #dcdfe4; }

/* board header */
.main { flex: 1; padding: 40px 0 0 34px; }
.crumbs { display: flex; height: 30px; align-items: center; padding: 0 0 1px 24px; font-size: 21px; letter-spacing: -.35px; color: #44546f; }
.crumbs i { width: 37px; text-align: center; font-style: normal; }
.titlebar { display: flex; justify-content: space-between; height: 48px; margin: 3px 60px 0 24px; align-items: center; }
h1 { margin: 0; font-size: 35px; font-weight: 600; letter-spacing: -1.700px; color: #172b4d; }
.actions { display: flex; align-items: center; font-size: 21px; font-weight: 500; }
.fave { margin-left: 24px; color: #626f86; } .share { margin-left: 19px; } .full { margin: 0 23px 0 20px; }
.primary { width: 195px; height: 48px; margin-right: 12px; border-radius: 5px; background: #2b63da; color: #fff; display: grid; place-items: center; letter-spacing: -.15px; }
.more { width: 48px; height: 48px; border-radius: 5px; background: #f0f1f4; display: grid; place-items: center; }
.goal { margin: -1px 0 0 24px; font-size: 18px; line-height: 24px; color: #626f86; letter-spacing: -.03px; }
.filters { display: flex; align-items: center; height: 50px; margin: 44px 60px 0 24px; }
.boxsearch { width: 276px; height: 50px; border: 2px solid #8590a2; border-radius: 7px; display: flex; align-items: center; gap: 8px; padding-left: 13px; font-size: 21px; letter-spacing: -.5px; color: #626f86; }
.people { display: flex; margin-left: 24px; }
.people .av + .av { margin-left: -3px; }
.people .av { position: relative; }
.people .av:nth-child(1) { z-index: 5; } .people .av:nth-child(2) { z-index: 1; } .people .av:nth-child(3) { z-index: 4; } .people .av:nth-child(4) { z-index: 3; } .people .av:nth-child(5) { z-index: 2; }
.people .av:nth-child(2) { z-index: 4; } .people .av:nth-child(3) { z-index: 3; } .people .av:nth-child(4) { z-index: 2; } .people .av:nth-child(5) { z-index: 1; }
.invite { width: 48px; height: 48px; margin-left: 15px; border-radius: 50%; background: #e4e6ea; display: grid; place-items: center; }
.right { display: flex; align-items: center; margin-left: auto; font-size: 21px; font-weight: 500; color: #172b4d; }
.group { font-size: 17px; font-weight: 400; color: #626f86; letter-spacing: -.35px; margin-right: 12px; }
.btn { height: 48px; border-radius: 5px; background: #f0f1f4; display: flex; align-items: center; padding-left: 18px; letter-spacing: -.1px; white-space: nowrap; }
.none { width: 125px; gap: 16px; margin-right: 13px; color: #172b4d; }
.none svg { color: #44546f; }
.insights { width: 150px; padding-left: 15px; gap: 8px; }
.view { width: 206px; padding-left: 16px; gap: 10px; }

/* columns and cards */
.board { display: flex; gap: 18px; margin-top: 53px; height: 1188px; }
.col { flex: none; width: 405px; border-radius: 8px; background: #f7f8fa; padding: 0 7px 0 8px; display: flex; flex-direction: column; gap: 6px; }
.col h2 { margin: 0; height: 75px; padding: 0 0 4px 16px; display: flex; align-items: center; gap: 29px; font-size: 18px; font-weight: 600; color: #626f86; letter-spacing: .3px; }
.card { position: relative; flex: none; border-radius: 5px; background: #fff; padding: 19px 21px 21px 18px; box-shadow: 0 2px 2px rgba(9,30,66,.28), 0 0 2px rgba(9,30,66,.28); }
.card p { margin: 0 44px 0 0; font-size: 21px; line-height: 30px; letter-spacing: -.34px; color: #172b4d; }
.meta { display: flex; align-items: center; height: 36px; margin-top: 20px; }
.task { width: 22px; height: 22px; margin-left: 1px; }
.key { margin: 0 auto 0 7px; font-size: 18px; letter-spacing: -.3px; color: #44546f; }
.done .key { text-decoration: line-through; }
.prio { width: 18px; height: 14px; margin-right: 12px; }
.tick { width: 16px; height: 14px; }
.meta .tick { margin-right: 13px; }
.cardmenu { position: absolute; right: 12px; top: 12px; width: 48px; height: 48px; border-radius: 5px; background: #f0f1f4; display: grid; place-items: center; }
.newissue { display: flex; align-items: center; gap: 8px; height: 54px; padding-left: 14px; font-size: 21px; font-weight: 500; letter-spacing: -.28px; color: #172b4d; }
.newissue svg, .addcol svg { color: #44546f; }
.addcol { width: 48px; height: 48px; margin-left: -6px; border-radius: 5px; background: #f0f1f4; display: grid; place-items: center; }
.dockshade { position: absolute; left: 0; right: 0; bottom: 0; height: 100px; background: linear-gradient(rgba(0,0,0,0), rgba(0,0,0,.13)); -webkit-mask-image: linear-gradient(90deg, transparent, #000 220px, #000 2800px, transparent 3010px); mask-image: linear-gradient(90deg, transparent, #000 220px, #000 2800px, transparent 3010px); }

/* dock */
.dock { position: absolute; left: 85px; top: 1830px; width: 2855px; height: 124px; border-radius: 38px; display: flex; padding: 19px 0 0 5px; box-shadow: inset 0 0 0 2px rgba(255,255,255,.25);
  background: radial-gradient(ellipse 150px 120px at 165px 30px, rgba(160,88,120,.8), transparent), radial-gradient(ellipse 150px 120px at 690px 60px, rgba(150,84,110,.7), transparent), linear-gradient(90deg, #62585f 0, #5e5a60 560px, #66587a 850px, #605674 950px, #a159dc 1160px, #b25fe6 1400px, #b962d6 1750px, #cc68d0 1950px, #de6cba 2280px, #c268a8 2450px, #93589a 2700px, #93589a 100%); }
.app { position: relative; flex: none; width: 101.950px; }
.app > svg { width: 76px; height: 76px; margin-left: 13px; }
.app.run::after { content: ""; position: absolute; left: 46px; top: 93px; width: 8px; height: 8px; border-radius: 50%; background: #1a0430; }
.badge { position: absolute; left: 66px; top: -9px; width: 36px; height: 36px; border-radius: 50%; background: #ea4f41; color: #fff; font-size: 23px; font-weight: 400; display: grid; place-items: center; }
.sep { flex: none; width: 45px; height: 92px; margin-top: -3px; background: linear-gradient(#74347a, #74347a) 22px 0 / 2px 92px no-repeat; }
.sep.wide { width: 46px; background-position: 24px 0; }
.jb { font: 700 28px "Open Sans", sans-serif; fill: #fff; }
.term { font: 400 24px "Liberation Mono", monospace; fill: #5fe045; }
.notion { font: 700 48px "Liberation Serif", serif; fill: #000; }
.doc { font: 400 10px "Liberation Serif", serif; fill: #fff; }
```
